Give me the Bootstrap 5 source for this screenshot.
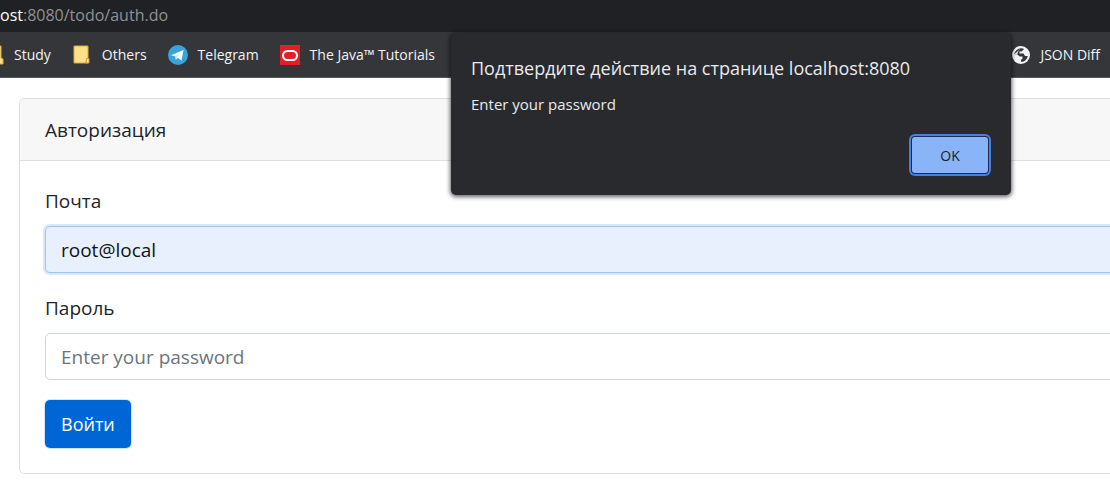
<!DOCTYPE html>
<html lang="ru">
<head>
<meta charset="utf-8">
<meta name="viewport" content="width=device-width, initial-scale=1">
<title>Авторизация</title>
<link href="https://cdn.jsdelivr.net/npm/bootstrap@5.3.0/dist/css/bootstrap.min.css" rel="stylesheet">
<style>
  body { font-family: "Open Sans", "Noto Sans", sans-serif; font-size: 19px; line-height: 30px; color: #212529; background: #fff; }
  .address-bar { height: 32px; background: #202124; color: #8f9194; font-size: 16px; margin: 0; }
  .address-bar b { color: #fff; font-weight: 400; }
  .bookmarks { height: 46px; background: #35363a; border-bottom: 1px solid #58595c; padding-right: 10px; }
  .bookmarks a { color: #f1f3f4; font-size: 14px; text-decoration: none; white-space: nowrap; gap: 10px; }
  .bookmarks svg { flex: none; }
  .bookmark-group { margin-left: -16px; gap: 21px; }
  .page { padding: 20px 0 8px 19px; }
  .login { margin-right: -40px; border-color: #dfdfdf; border-radius: 5px; }
  .login .card-header { padding: 16px 25px 15px; background: #f7f7f7; border-color: #dfdfdf; }
  .login .card-body { padding: 25px; }
  .login label { margin-bottom: 10px; display: block; }
  .field { margin-bottom: 20px; }
  .field .form-control { height: 47px; padding: 0 15px; font-size: 19px; border-color: #ced4da; border-radius: 5px; color: #212529; }
  .field .form-control::placeholder { color: #6c757d; }
  .field .filled { background: #e8f0fe; border-color: #a3c4ea; box-shadow: 0 0 0 2px #d5e9fd; color: #101214; }
  .btn-enter { height: 48px; padding: 0 16px; font-size: 18px; border: 0; border-radius: 5px; background: #0066d6; color: #fff; box-shadow: 0 0 0 1px #c8e8ff; }
  .prompt { top: 33px; left: 451px; right: 99px; padding: 20px; background: #292a2d; color: #e8eaed; border-radius: 5px; box-shadow: 0 1px 4px 1px rgba(0,0,0,.6); }
  .prompt h1 { font-size: 18px; line-height: 30px; font-weight: 400; margin: 0 0 8px; }
  .prompt p { font-size: 15px; line-height: 26px; margin: 0 0 20px; }
  .btn-ok { width: 76px; height: 36px; margin: 0 3px 2px 0; padding: 0; font-size: 14px; border: 0; border-radius: 3px; background: #8ab4f8; color: #202124; box-shadow: 0 0 0 1px #1b2d50, 0 0 0 3px #4a80dc; }
</style>
</head>
<body class="overflow-hidden">
<header class="position-relative">
  <p class="address-bar"><b>ost</b>:8080/todo/auth.do</p>
  <nav class="bookmarks d-flex align-items-center justify-content-between" aria-label="Закладки">
    <div class="d-flex align-items-center bookmark-group">
      <a href="#" class="d-flex align-items-center"><svg width="20" height="20" viewBox="0 0 20 20"><path d="M3 1h14v12l2 1v5H3z" fill="#ffe08a" stroke="#d7ab35"/></svg>Study</a>
      <a href="#" class="d-flex align-items-center"><svg width="20" height="20" viewBox="0 0 20 20"><path d="M2 1h14v17H2z" fill="#ffe08a" stroke="#d7ab35"/><path d="M14.500 13.500h2.500v4.500h-3z" fill="#ffe9a4" stroke="#c99a28"/></svg>Others</a>
      <a href="#" class="d-flex align-items-center"><svg width="20" height="20" viewBox="0 0 20 20"><circle cx="10" cy="10" r="10" fill="#37a5dc"/><path d="M3 10.200 15.500 5.100 13.500 15.500 9.800 12.900 7.700 14.500 7.300 11.600z" fill="#fff"/><path d="M7.300 11.600 13 7.500 8.500 12.200 7.700 14.500z" fill="#b9d9ec"/></svg>Telegram</a>
      <a href="#" class="d-flex align-items-center"><svg width="20" height="20" viewBox="0 0 20 20"><path d="M0 0h20v20H0z" fill="#e21f26"/><rect x="3" y="6" width="14" height="9" rx="4.500" fill="none" stroke="#fff" stroke-width="2"/></svg>The Java™ Tutorials</a>
    </div>
    <a href="#" class="d-flex align-items-center"><svg width="18" height="18" viewBox="0 0 18 18"><circle cx="9" cy="9" r="9" fill="#f1f3f4"/><path d="M9 2.200 11 2.400 12 3.200 9.500 5.500H7.500V7.500H11.500L13 10H15.700C15.200 13.500 12.500 15.800 9 15.800V14L10.500 12.500V10.500H7.500L5.500 8.500 2.300 8.200C2.800 5 5.500 2.300 9 2.200Z" fill="#35363a"/><path d="M2.300 8.200 9 2.200 6.500 5 5 8.500z" fill="#f1f3f4"/></svg>JSON Diff</a>
  </nav>
  <section class="prompt position-absolute z-3" role="dialog" aria-labelledby="prompt-title">
    <h1 id="prompt-title">Подтвердите действие на странице localhost:8080</h1>
    <p>Enter your password</p>
    <div class="d-flex justify-content-end"><button type="button" class="btn btn-ok">OK</button></div>
  </section>
</header>
<main class="page">
  <div class="card login">
    <div class="card-header">Авторизация</div>
    <form class="card-body">
      <div class="field">
        <label for="email">Почта</label>
        <input class="form-control filled" id="email" type="text" value="root@local">
      </div>
      <div class="field">
        <label for="password">Пароль</label>
        <input class="form-control" id="password" type="password" placeholder="Enter your password">
      </div>
      <button type="button" class="btn btn-enter">Войти</button>
    </form>
  </div>
</main>
<script src="https://cdn.jsdelivr.net/npm/bootstrap@5.3.0/dist/js/bootstrap.bundle.min.js"></script>
</body>
</html>
